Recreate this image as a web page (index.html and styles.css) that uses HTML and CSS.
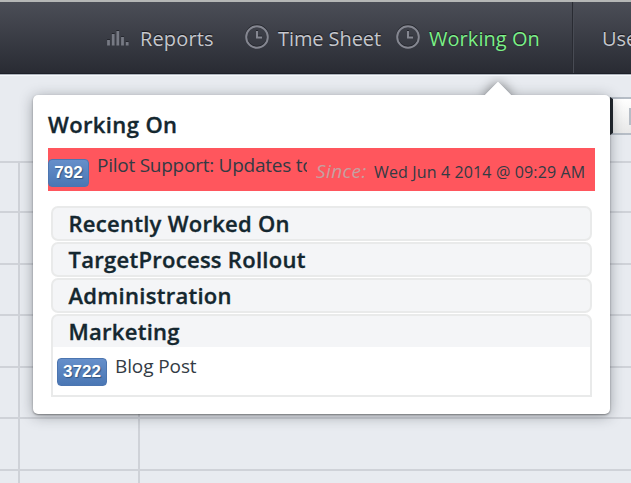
FILE: index.html
```html
<!DOCTYPE html>
<html lang="en">
<head>
<meta charset="utf-8">
<title>Working On</title>
<link rel="stylesheet" href="styles.css">
</head>
<body>
<nav class="bar">
  <a class="item reports"><svg class="bars" width="23" height="18" viewBox="0 0 23 18"><path d="M2.5 11v5.5M7.2 5v11.5M11.8 2v14.5M16.5 8v8.5M21.2 13v3.5"/></svg><span class="t-reports">Reports</span></a>
  <a class="item sheet"><svg class="clock" width="24" height="24" viewBox="0 0 24 24"><circle cx="12" cy="12" r="10.8"/><path d="M12 6v6.5h5"/></svg><span>Time Sheet</span></a>
  <a class="item active"><svg class="clock" width="24" height="24" viewBox="0 0 24 24"><circle cx="12" cy="12" r="10.8"/><path d="M12 6v6.5h5"/></svg><span>Working On</span></a>
  <a class="item users"><span>Users</span></a>
</nav>
<main>
  <div class="toolbar"><div class="control"><span class="box"></span></div></div>
  <div class="sheet-grid">
    <div class="row first"><i></i><i></i><i></i></div>
    <div class="row"><i></i><i></i><i></i></div>
    <div class="row"><i></i><i></i><i></i></div>
    <div class="row"><i></i><i></i><i></i></div>
    <div class="row"><i></i><i></i><i></i></div>
    <div class="row"><i></i><i></i><i></i></div>
    <div class="row last"><i></i><i></i><i></i></div>
  </div>
</main>
<section class="popover">
  <h2>Working On</h2>
  <div class="current">
    <span class="badge b1">792</span>
    <span class="task">Pilot Support: Updates to</span>
    <em>Since:</em>
    <span class="time">Wed Jun 4 2014 @ 09:29 AM</span>
  </div>
  <div class="groups">
    <h3>Recently Worked On</h3>
    <h3>TargetProcess Rollout</h3>
    <h3>Administration</h3>
    <h3 class="open">Marketing</h3>
    <div class="panel"><span class="badge b2">3722</span><span class="post">Blog Post</span></div>
  </div>
</section>
</body>
</html>
```
FILE: styles.css
```css
* { box-sizing: border-box; }
body { margin: 0; width: 631px; height: 483px; overflow: hidden; position: relative; background: #e8ebf0; font-family: "Open Sans", sans-serif; color: #333b44; }
.bar { height: 74px; display: flex; border-top: 2px solid #b5b7b6; border-bottom: 1px solid #1d2028; background: linear-gradient(#4b4e57, #292b33); box-shadow: 0 1px 0 #aeb4bd, 0 2px 0 #f6f8fa; padding-left: 106px; overflow: hidden; }
.item { flex: none; display: flex; align-items: center; height: 71px; font-size: 20px; line-height: 28px; color: #c5c7cd; text-shadow: 0 -1px 1px #15161b; white-space: nowrap; }
.item span { padding-top: 2px; }
.t-reports { letter-spacing: .15px; }
.reports { width: 138px; }
.sheet { width: 152px; letter-spacing: -.08px; }
.active { width: 177px; color: #7cf088; border-right: 1px solid #292b32; letter-spacing: .05px; }
.users { padding-left: 28px; border-left: 1px solid #484b54; }
.item svg { fill: none; stroke: #858791; stroke-width: 2; flex: none; filter: drop-shadow(0 -1px 0 #25272e); }
.bars { margin-right: 11px; }
.item .bars { stroke-width: 2.8; stroke: #777a84; }
.clock { margin: 0 9px 1px 1px; }
.active .clock { margin-left: 0; }
main { display: flex; flex-direction: column; }
.toolbar { height: 87px; padding-top: 23px; display: flex; justify-content: flex-end; }
.control { width: 21px; height: 38px; border: 2px solid #b6bdc6; border-right: 0; border-left: 3px solid #20252b; background: linear-gradient(#fff, #e8e8e8); padding: 9px 0 0 16px; }
.box { display: block; width: 2px; height: 17px; background: #b6bdc6; }
.row { height: 51.5px; display: grid; grid-template-columns: 20px 120px 1fr; border-top: 2px solid #cfd2d8; }
.row.first { height: 50px; }
.row.last { height: 14.5px; }
.row i { border-right: 2px solid #cfd2d8; }
.row i:last-child { border: 0; }
.row.first i:nth-child(2) { border: 0; }
.popover { position: absolute; left: 33px; top: 95px; width: 577px; height: 319px; padding: 13px 15px 0; background: #fff; border-radius: 5px; box-shadow: 0 1px 2px rgba(0,0,0,.38), 0 2px 14px rgba(40,48,56,.4); }
.popover::before { content: ""; position: absolute; left: 451px; top: -13px; width: 28px; height: 14px; background: #fff; clip-path: polygon(50% 0, 100% 100%, 0 100%); }
.popover::after { content: ""; position: absolute; z-index: -1; left: 455px; top: -9px; width: 20px; height: 20px; transform: rotate(45deg); box-shadow: 0 0 12px rgba(0,0,0,.5); }
h2, h3 { margin: 0; color: #14272f; font-weight: 600; -webkit-text-stroke: .35px #14272f; }
h2 { height: 40px; font-size: 22px; line-height: 33px; letter-spacing: .38px; }
.current { height: 43px; width: 547px; background: #ff565d; display: flex; align-items: flex-start; white-space: nowrap; }
.badge { flex: none; height: 28px; border-radius: 4px; border: 1px solid #4c75b0; background: linear-gradient(#668fca, #4a77b4); color: #fff; text-align: center; font-family: "Liberation Sans", sans-serif; font-weight: 700; font-size: 17px; line-height: 26px; text-shadow: 1px 1px 1px #315682; }
.b1 { width: 41px; margin-top: 11px; }
.b2 { width: 50px; margin-top: 11px; }
.task { width: 210px; margin-left: 8px; overflow: hidden; font-size: 19px; line-height: 26px; margin-top: 4px; letter-spacing: -.25px; }
em { margin: 10px 0 0 9px; width: 58px; font-size: 19px; line-height: 26px; color: #c6a0a0; letter-spacing: .4px; }
.time { margin-top: 12px; font-size: 16px; line-height: 24px; letter-spacing: .14px; }
.groups { margin: 15px 0 0 3px; width: 541px; }
h3 { height: 35px; margin-bottom: 1px; padding-left: 15.5px; border: 2px solid #e9eaea; border-radius: 7px; background: #f4f5f7; font-size: 22px; line-height: 30px; letter-spacing: .28px; }
.open { height: 33px; margin: 0; border-bottom: 0; border-radius: 7px 7px 0 0; }
.panel { height: 50px; border: 2px solid #e9eaea; border-top: 0; display: flex; padding-left: 4px; }
.post { margin: 6px 0 0 8px; font-size: 19px; line-height: 26px; letter-spacing: -.1px; }
```
